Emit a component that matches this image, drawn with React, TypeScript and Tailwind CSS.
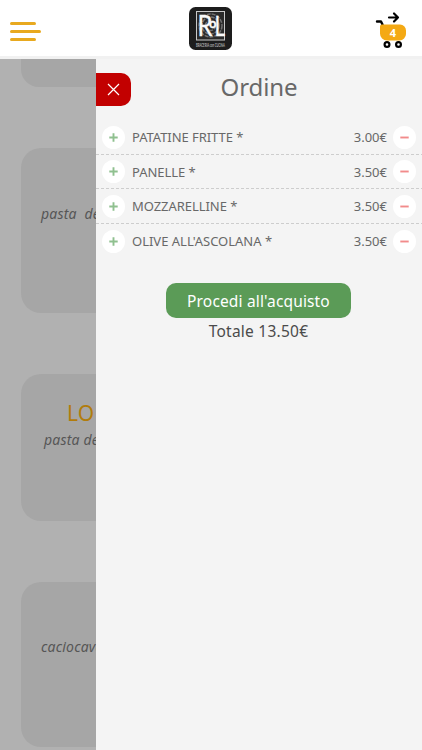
const items = [
  { name: "PATATINE FRITTE *", price: "3.00€", tracking: "tracking-[-0.05px]" },
  { name: "PANELLE *", price: "3.50€", tracking: "tracking-[-0.05px]" },
  { name: "MOZZARELLINE *", price: "3.50€", tracking: "tracking-[-0.05px]" },
  { name: "OLIVE ALL'ASCOLANA *", price: "3.50€", tracking: "tracking-[0px]" },
];

function Logo() {
  return (
    <svg width="43" height="43" viewBox="0 0 43 43" className="block">
      <rect width="43" height="43" rx="6.5" fill="#1d1d1d" />
      <rect x="7.5" y="4.500" width="28" height="28.500" fill="#2a2a2a" stroke="#c9c9c9" strokeWidth="1" />
      <g fill="none" stroke="#727272" strokeWidth="1.5" strokeDasharray="4 1">
        <circle cx="21.500" cy="18.500" r="11.500" />
        <circle cx="21.500" cy="18.500" r="8.500" />
        <circle cx="21.500" cy="18.500" r="5" />
      </g>
      <g fill="#fafafa" stroke="#fafafa" strokeWidth=".3" fontFamily="Lato, sans-serif">
        <text x="8.500" y="28.500" fontSize="29" textLength="15" lengthAdjust="spacingAndGlyphs">R</text>
        <text x="20" y="20.500" fontSize="13" fontWeight="700">o</text>
        <text x="25.500" y="29" fontSize="27" textLength="10.500" lengthAdjust="spacingAndGlyphs">L</text>
      </g>
      <text x="7" y="39.5" fontSize="5" fontWeight="700" fill="#b5b5b5" fontFamily="Lato, sans-serif" textLength="29" lengthAdjust="spacingAndGlyphs">BRACERIA con CUCINA</text>
    </svg>
  );
}

function CartIcon() {
  return (
    <svg width="34" height="38" viewBox="0 0 34 38" className="block">
      <g fill="none" stroke="#000" strokeWidth="2.2" strokeLinecap="round" strokeLinejoin="round">
        <path d="M14 6.5h9M19 2.5l4 4-4 4" />
        <path d="M2 10.5h4l1.5 3" strokeWidth="2.4" />
        <circle cx="12" cy="33.5" r="2.4" />
        <circle cx="23.5" cy="33.5" r="2.4" />
      </g>
      <path d="M7 13.500h18a6 6 0 0 1 6 6v3.500a6.500 6.500 0 0 1-6.500 6.500H12a7 7 0 0 1-7-7v-7a2 2 0 0 1 2-2Z" fill="#f4a914" />
      <text x="18" y="25.500" textAnchor="middle" fontSize="11" fontWeight="700" fill="#fff" fontFamily="Noto Sans, sans-serif">4</text>
    </svg>
  );
}

function Header() {
  return (
    <header className="flex h-[56px] shrink-0 items-start bg-white">
      <button className="ml-[10px] mt-[22px] flex w-[50px] flex-col items-start gap-[5px]" aria-label="Menu">
        <span className="h-[3px] w-[26px] rounded-full bg-[#e8a91f]" />
        <span className="h-[3px] w-[31px] rounded-full bg-[#e8a91f]" />
        <span className="h-[3px] w-[26px] rounded-full bg-[#e8a91f]" />
      </button>
      <div className="ml-[129px] mt-[7px]"><Logo /></div>
      <div className="ml-auto mr-[13px] mt-[11px]"><CartIcon /></div>
    </header>
  );
}

function RoundButton({ minus = false }: { minus?: boolean }) {
  return (
    <button className="flex size-[23px] shrink-0 items-center justify-center rounded-full bg-white" aria-label={minus ? "Rimuovi" : "Aggiungi"}>
      <svg width="9" height="9" viewBox="0 0 9 9" fill="none" strokeWidth="1.9" stroke={minus ? "#f28b8b" : "#8fc08f"}>
        <path d={minus ? "M.3 4.500h8.400" : "M.3 4.500h8.400M4.500.3v8.400"} />
      </svg>
    </button>
  );
}

function MenuCards() {
  return (
    <div className="flex w-[96px] shrink-0 flex-col overflow-hidden bg-[#b1b1b1] pl-[21px] text-[14px] italic tracking-[0.2px] text-[#565656]">
      <div className="h-[28px] w-[380px] shrink-0 rounded-b-[18px] bg-[#a6a6a6]" />
      <div className="mt-[61px] h-[165px] w-[380px] shrink-0 rounded-[20px] bg-[#a6a6a6] pl-[20px] pt-[56px]">
        <p className="whitespace-pre leading-5">pasta  del giorno</p>
      </div>
      <div className="mt-[61px] h-[147px] w-[380px] shrink-0 rounded-[20px] bg-[#a6a6a6] pl-[23px] pt-[25px]">
        <h2 className="pl-[23px] text-[21px] not-italic leading-7 text-[#b17c0c]">LO CHEF</h2>
        <p className="mt-[3px] leading-5">pasta del giorno</p>
      </div>
      <div className="mt-[61px] h-[165px] w-[380px] shrink-0 rounded-[20px] bg-[#a6a6a6] pl-[20px] pt-[55px]">
        <p className="leading-5">caciocavallo</p>
      </div>
    </div>
  );
}

function Drawer() {
  return (
    <aside className="flex flex-1 flex-col bg-[#f4f4f4] text-[#686868]">
      <div className="flex h-[61px] items-start pt-[14px]">
        <button className="flex h-[33px] w-[35px] items-center justify-center rounded-r-[10px] bg-[#c20000]" aria-label="Chiudi">
          <svg width="13" height="13" viewBox="0 0 13 13" stroke="#fff" strokeWidth="1.2">
            <path d="m1 1 11 11M12 1 1 12" />
          </svg>
        </button>
        <h1 className="-mt-[2px] w-[256px] text-center text-[24px] leading-8 tracking-[-0.1px]">Ordine</h1>
      </div>
      <ul className="flex flex-col">
        {items.map((item, i) => (
          <li key={item.name} className="relative flex h-[34.600px] items-center px-[6px]">
            <RoundButton />
            <span className={`ml-[7px] flex-1 whitespace-nowrap text-[13px] leading-5 ${item.tracking}`}>{item.name}</span>
            <span className="mr-[6px] text-[13px] leading-5">{item.price}</span>
            <RoundButton minus />
            {i < 3 && (
              <svg className="absolute inset-x-0 bottom-0 h-px w-full" stroke="#cdcdcd" strokeWidth="1" strokeDasharray="3 2">
                <path d="M0 .5H326" />
              </svg>
            )}
          </li>
        ))}
      </ul>
      <div className="mt-[25px] flex flex-col items-center pr-[1px]">
        <button className="h-[35px] w-[185px] rounded-[10px] bg-[#5b9b57] text-[15.500px] leading-[36px] tracking-[0.15px] text-white">Procedi all'acquisto</button>
        <p className="mt-px text-[15.500px] leading-6 tracking-[0.25px] text-[#4b4b4b]">Totale 13.50€</p>
      </div>
    </aside>
  );
}

export default function App() {
  return (
    <main className="flex h-[750px] w-[422px] flex-col overflow-hidden bg-white font-['Noto_Sans',sans-serif]">
      <Header />
      <div className="h-[3px] shrink-0 bg-[#f1f1f1]" />
      <div className="flex min-h-0 flex-1">
        <MenuCards />
        <Drawer />
      </div>
    </main>
  );
}
